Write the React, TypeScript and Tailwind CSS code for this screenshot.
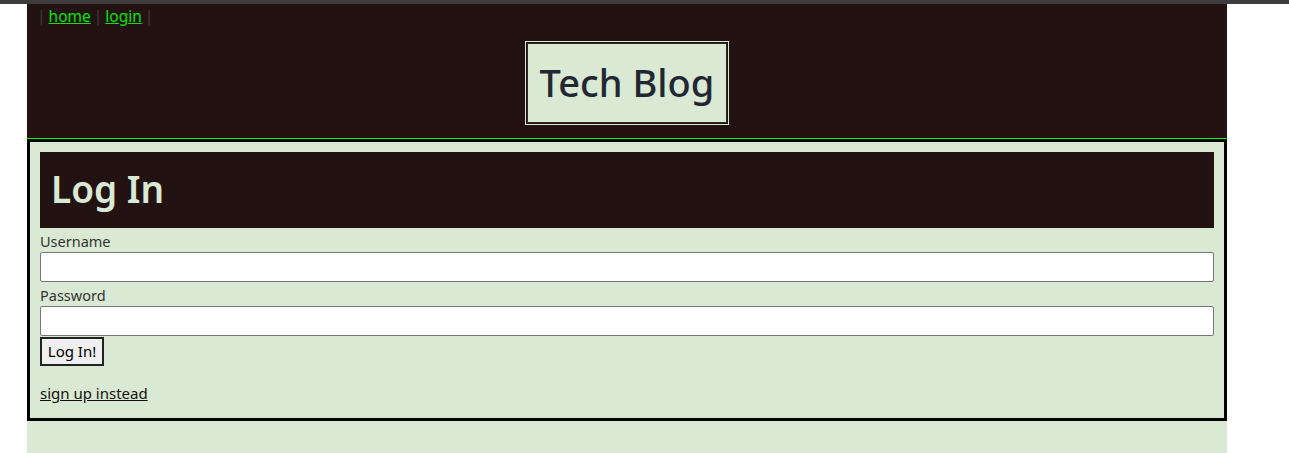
import React from 'react';

const font = { fontFamily: '"Noto Sans", "Open Sans", sans-serif' };

export default function App() {
  return (
    <div className="min-h-[453px] bg-white" style={font}>
      <div className="h-[4px] bg-[#3c3c3c]" />
      <div className="ml-[27px] w-[1200px] bg-[#d9e9d3] min-h-[449px]">
        <header className="bg-[#231212] h-[134px] flex flex-col">
          <nav className="flex items-center pl-[10px] pt-[1px] text-[15.5px] leading-[22px]">
            <span className="text-[#3a3a3a]">|</span>
            <a href="#" className="text-[#00e600] underline px-[3px]">home</a>
            <span className="text-[#3a3a3a]">|</span>
            <a href="#" className="text-[#00e600] underline px-[3px]">login</a>
            <span className="text-[#3a3a3a]">|</span>
          </nav>
          <div className="flex justify-center mt-[14px]">
            <div className="border border-[#d9e9d3] p-px">
              <div className="border border-[#2a2a2a] bg-[#d9e9d3] w-[200px] h-[80px] flex items-center justify-center">
                <h1 className="text-[38px] font-medium text-[#222831] leading-none -mt-[3px]">Tech Blog</h1>
              </div>
            </div>
          </div>
        </header>
        <div className="h-px bg-[#00ff00]" />
        <main className="border-[3px] border-black px-[10px] pt-[10px] pb-[14px]">
          <div className="bg-[#231212] h-[76px] flex items-center pl-[11px]">
            <h2 className="text-[37px] font-semibold text-[#d9e9d3] leading-none -mt-[3px]">Log In</h2>
          </div>
          <form className="flex flex-col text-[#333]" onSubmit={(e) => e.preventDefault()}>
            <label className="text-[14.5px] leading-[20px] mt-[3px]">Username</label>
            <input className="h-[30px] mt-px bg-white border border-[#767676] rounded-[2px]" />
            <label className="text-[14.5px] leading-[20px] mt-[3px]">Password</label>
            <input type="password" className="h-[30px] mt-px bg-white border border-[#767676] rounded-[2px]" />
            <div>
              <button className="mt-px h-[29px] w-[64px] bg-[#efefef] border-2 border-[#222] text-[15px] text-black">Log In!</button>
            </div>
          </form>
          <a href="#" className="block mt-[16px] text-[15px] leading-[22px] text-[#111] underline w-fit">sign up instead</a>
        </main>
      </div>
    </div>
  );
}
